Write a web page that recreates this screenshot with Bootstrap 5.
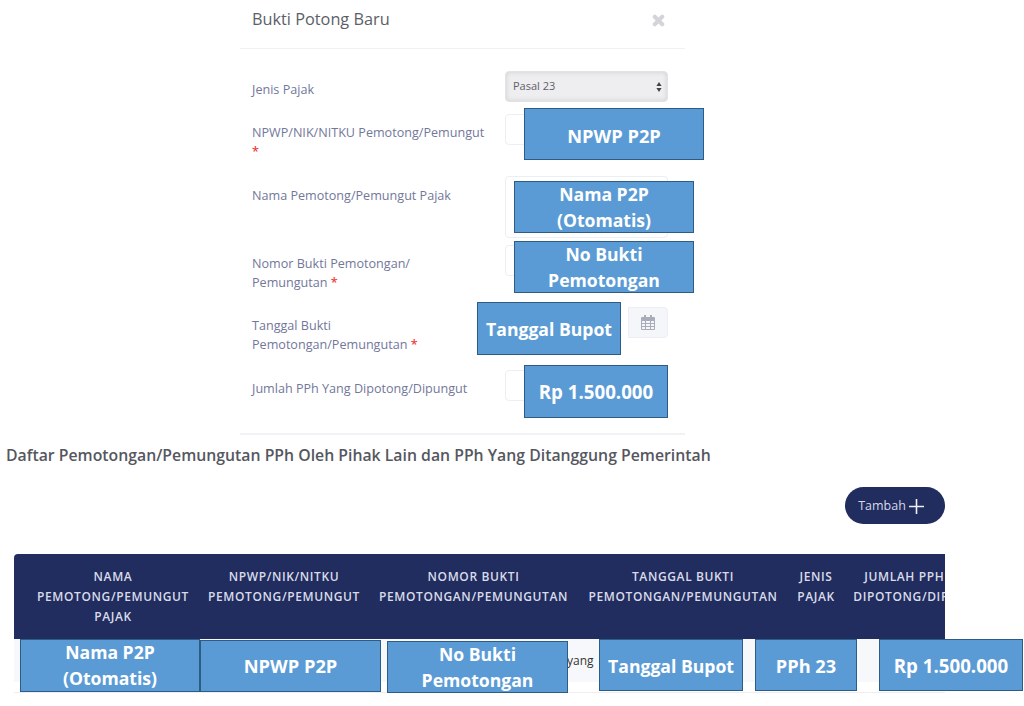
<!DOCTYPE html>
<html lang="id">
<head>
<meta charset="utf-8">
<title>Bukti Potong Baru</title>
<link href="https://cdn.jsdelivr.net/npm/bootstrap@5.3.0/dist/css/bootstrap.min.css" rel="stylesheet">
<style>
html,body{height:706px;overflow:hidden;background:#fff}
body{font-family:"Open Sans",sans-serif;position:relative;width:1024px}
.dlg{width:445px;margin-left:240px;height:435px;border-bottom:2px solid #f1f2f5}
.dlg-head{height:49px;border-bottom:1px solid #f0f1f4;padding:8px 20px 0 12px}
.dlg-title{font-size:16.3px;line-height:22px;color:#5c5e68;font-weight:400;margin:0}
.dlg-close{margin-top:6px}
.dlg-form{padding:22px 17px 0 12px}
.frow{display:flex}
.frow label{width:253px;flex:none;font-size:12.6px;line-height:19px;color:#73779a;padding-right:18px}
.req{color:#f0403c;font-weight:600}
.ctl{width:163px;flex:none}
.ctl .form-control,.ctl .form-select{border-radius:4px;border:1px solid #eceef3;height:31px;box-shadow:none}
.ctl .form-select{border:1px solid #e3e3e6;background-color:#eeeef0;font-size:11px;color:#5f6068;padding:0 0 0 7px;box-shadow:inset 0 0 5px #cfcfd3;
background-image:url("data:image/svg+xml,%3Csvg xmlns='http://www.w3.org/2000/svg' viewBox='0 0 6 10'%3E%3Cpath fill='%23444' d='M3 0l2.6 4H.4zM3 10L.4 6h5.2z'/%3E%3C/svg%3E");background-size:6px 10px;background-position:right 5px center}
.ctl textarea.form-control{height:62px;resize:none}
.r2{margin-top:12px;height:30px}
.r2 label{padding-top:9px}
.r3{margin-top:32px;height:62px}
.r3 label{padding-top:10px}
.r4{margin-top:7px;height:31px}
.r4 label{padding-top:9px}
.r5{margin-top:31px;height:31px}
.r5 label{padding-top:9px}
.r6{margin-top:32px}
.r6 label{padding-top:9px}
.r1 label{padding-top:9px}
.cal-box{width:40px;height:31px;background:#f5f6f9;border:1px solid #eceef3;border-radius:0 4px 4px 0;margin-left:auto;display:flex;align-items:center;justify-content:center}
.sect-title{font-size:15.8px;font-weight:600;color:#55575f;margin:10px 0 0 6px;line-height:20px}
.add-wrap{width:945px;display:flex;justify-content:flex-end;margin-top:22px}
.add-btn{width:100px;height:37px;border-radius:19px;background:#212c5f;color:#d5d8e6;font-size:12.5px;padding:1px 7px 0 0;display:flex;align-items:center;justify-content:center;gap:2px;border:none}
.add-btn:hover{background:#212c5f;color:#d5d8e6}
.tbl-clip{width:931px;margin:30px 0 0 14px;overflow:hidden;border-radius:4px 0 0 0}
.tbl{table-layout:fixed;width:990px;margin:0;border-collapse:collapse}
.tbl th{background:#212c5f;color:#d9dce8;font-size:12px;font-weight:600;letter-spacing:.62px;line-height:20px;text-align:center;text-transform:uppercase;vertical-align:top;padding:13px 0 12px;border:0;height:85px}
.tbl th.c1{padding-left:23px;padding-right:10px}
.tbl td{padding:0;border:0}
.tbl .row-a td{background:#f7f8fb;height:41px;padding-left:553px;font-size:12px;font-weight:500;color:#333;line-height:43px;white-space:nowrap;vertical-align:middle}
.tbl .row-b td{height:10px;border-bottom:1px solid #eceef2;background:#fff}
.tag{position:absolute;background:#5b9bd5;border:1px solid #2f5c85;color:#fff;font-family:"Open Sans",sans-serif;font-weight:700;font-size:17.6px;line-height:26px;text-align:center;display:flex;align-items:center;justify-content:center}
.t-npwp{left:524px;top:108px;width:180px;height:52px;font-size:18.3px;padding-top:3px}
.t-nama{left:514px;top:181px;width:180px;height:52px}
.t-nomor{left:514px;top:241px;width:180px;height:52px}
.t-tgl{left:477px;top:302px;width:144px;height:53px}
.t-rp{left:524px;top:365px;width:144px;height:53px;font-size:18.7px}
.b-nama{left:20px;top:639px;width:180px;height:53px;padding-bottom:2px}
.b-npwp{left:200px;top:640px;width:181px;height:52px;font-size:18.3px}
.b-nomor{left:387px;top:641px;width:181px;height:52px}
.b-tgl{left:599px;top:639px;width:144px;height:52px;padding-top:2px}
.b-pph{left:755px;top:639px;width:102px;height:52px;font-size:18.2px;padding-top:2px}
.b-rp{left:879px;top:639px;width:144px;height:52px;font-size:18.7px;padding-top:2px}
</style>
</head>
<body>
<div class="dlg">
  <div class="dlg-head d-flex justify-content-between">
    <h5 class="dlg-title">Bukti Potong Baru</h5>
    <svg class="dlg-close" width="13" height="13" viewBox="0 0 14 14" aria-hidden="true"><path d="M3 3l8 8M11 3l-8 8" stroke="#d4d5da" stroke-width="4.4" stroke-linecap="round"/></svg>
  </div>
  <form class="dlg-form">
    <div class="frow r1"><label>Jenis Pajak</label><div class="ctl"><select class="form-select"><option>Pasal 23</option></select></div></div>
    <div class="frow r2"><label>NPWP/NIK/NITKU Pemotong/Pemungut <span class="req">*</span></label><div class="ctl"><input class="form-control"></div></div>
    <div class="frow r3"><label>Nama Pemotong/Pemungut Pajak</label><div class="ctl"><textarea class="form-control"></textarea></div></div>
    <div class="frow r4"><label>Nomor Bukti Pemotongan/<br>Pemungutan <span class="req">*</span></label><div class="ctl"><input class="form-control"></div></div>
    <div class="frow r5"><label>Tanggal Bukti<br>Pemotongan/Pemungutan <span class="req">*</span></label><div class="ctl"><div class="cal-box">
      <svg width="14" height="15" viewBox="0 0 14 15" aria-hidden="true"><path fill="#a9adb9" fill-rule="evenodd" d="M3 0h2v2h4V0h2v2h2a1 1 0 0 1 1 1v11a1 1 0 0 1-1 1H1a1 1 0 0 1-1-1V3a1 1 0 0 1 1-1h2zM1 6v2h3V6zm4 0v2h4V6zm5 0v2h3V6zM1 9v2h3V9zm4 0v2h4V9zm5 0v2h3V9zM1 12v2h3v-2zm4 0v2h4v-2zm5 0v2h3v-2z"/></svg>
    </div></div></div>
    <div class="frow r6"><label>Jumlah PPh Yang Dipotong/Dipungut</label><div class="ctl"><input class="form-control"></div></div>
  </form>
</div>

<h6 class="sect-title">Daftar Pemotongan/Pemungutan PPh Oleh Pihak Lain dan PPh Yang Ditanggung Pemerintah</h6>

<div class="add-wrap">
  <button type="button" class="btn add-btn">Tambah
    <svg width="17" height="17" viewBox="0 0 17 17" aria-hidden="true"><path d="M8.5 1v15M1 8.5h15" stroke="#eef0f6" stroke-width="1.6"/></svg>
  </button>
</div>

<div class="tbl-clip">
  <table class="table tbl">
    <colgroup><col style="width:185px"><col style="width:170px"><col style="width:209px"><col style="width:210px"><col style="width:56px"><col style="width:160px"></colgroup>
    <thead><tr>
      <th class="c1">Nama Pemotong/Pemungut Pajak</th>
      <th>NPWP/NIK/NITKU Pemotong/Pemungut</th>
      <th>Nomor Bukti Pemotongan/Pemungutan</th>
      <th>Tanggal Bukti Pemotongan/Pemungutan</th>
      <th>Jenis Pajak</th>
      <th>Jumlah PPh Yang Dipotong/Dipungut</th>
    </tr></thead>
    <tbody>
      <tr class="row-a"><td colspan="6">yang</td></tr>
      <tr class="row-b"><td colspan="6"></td></tr>
    </tbody>
  </table>
</div>

<div class="tag t-npwp">NPWP P2P</div>
<div class="tag t-nama">Nama P2P<br>(Otomatis)</div>
<div class="tag t-nomor">No Bukti<br>Pemotongan</div>
<div class="tag t-tgl">Tanggal Bupot</div>
<div class="tag t-rp">Rp 1.500.000</div>
<div class="tag b-nama">Nama P2P<br>(Otomatis)</div>
<div class="tag b-npwp">NPWP P2P</div>
<div class="tag b-nomor">No Bukti<br>Pemotongan</div>
<div class="tag b-tgl">Tanggal Bupot</div>
<div class="tag b-pph">PPh 23</div>
<div class="tag b-rp">Rp 1.500.000</div>
</body>
</html>
